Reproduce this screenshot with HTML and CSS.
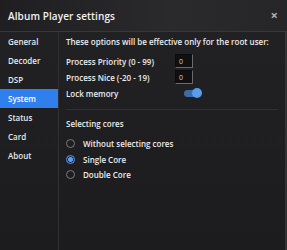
FILE: index.html
```html
<!DOCTYPE html>
<html lang="en">
<head>
  <meta charset="UTF-8" />
  <title>Album Player settings</title>
  <link rel="stylesheet" href="styles.css">
</head>
<body>
  <div class="dialog">
    <div class="header">
      <span class="title">Album Player settings</span>
      <span class="close">&times;</span>
    </div>
    <div class="main">
      <ul class="nav">
        <li>General</li>
        <li>Decoder</li>
        <li>DSP</li>
        <li class="active">System</li>
        <li>Status</li>
        <li>Card</li>
        <li>About</li>
      </ul>
      <div class="content">
        <p class="note">These options will be effective only for the root user:</p>
        <div class="row">
          <span class="label">Process Priority (0 - 99)</span>
          <input class="num" type="text" value="0" />
        </div>
        <div class="row">
          <span class="label">Process Nice (-20 - 19)</span>
          <input class="num" type="text" value="0" />
        </div>
        <div class="row">
          <span class="label">Lock memory</span>
          <span class="toggle"><span class="knob"></span></span>
        </div>
        <div class="divider"></div>
        <p class="section">Selecting cores</p>
        <div class="radio-row"><span class="radio"></span>Without selecting cores</div>
        <div class="radio-row"><span class="radio checked"></span>Single Core</div>
        <div class="radio-row"><span class="radio"></span>Double Core</div>
      </div>
    </div>
  </div>
</body>
</html>
```

FILE: styles.css
```css
/* General Styling */
body,
html {
  margin: 0;
  padding: 0;
  height: 100%;
  background: #1d1d20;
  font-family: "Open Sans", "Noto Sans", sans-serif;
  color: #ececec;
}

.dialog {
  height: 250px;
  display: flex;
  flex-direction: column;
  background: linear-gradient(180deg, #222225 0%, #1c1c1f 100%);
}

/* Header */
.header {
  height: 32px;
  flex: none;
  box-sizing: border-box;
  display: flex;
  align-items: center;
  justify-content: space-between;
  padding: 0 9px 0 8px;
  border-bottom: 1px solid #38383b;
  background: linear-gradient(90deg, #1f1f21 0%, #2a2a2d 60%, #262628 100%);
}

.title {
  font-size: 10px;
  font-weight: 600;
  color: #f2f2f2;
  letter-spacing: 0.1px;
}

.close {
  font-size: 13px;
  font-weight: 700;
  color: #b0b0b0;
  line-height: 1;
}

.main {
  flex: 1;
  display: flex;
}

/* Side Menu */
.nav {
  list-style: none;
  margin: 0;
  padding: 0;
  width: 58px;
  border-right: 1px solid #303033;
}

.nav li {
  height: 19px;
  line-height: 19px;
  padding-left: 8px;
  font-size: 8px;
  font-weight: 600;
  color: #e8e8e8;
}

.nav li.active {
  background: #2f80ed;
  color: #fff;
}

/* Content */
.content {
  flex: 1;
  padding: 0 7px 0 7px;
  border-right: 2px solid #333336;
  font-size: 8px;
  font-weight: 600;
}

.note {
  margin: 0;
  height: 19px;
  line-height: 19px;
  margin-bottom: 2px;
}

.row {
  height: 16px;
  display: flex;
  align-items: center;
}

.label {
  width: 109px;
}

.num {
  width: 18px;
  height: 14px;
  box-sizing: border-box;
  margin: 0;
  padding: 0 0 0 3px;
  background: #101012;
  color: #cfcfcf;
  font-family: inherit;
  font-size: 7px;
  border: 1px solid #0b0b0c;
  border-right-color: #6b6b6e;
  border-bottom-color: #6b6b6e;
}

.toggle {
  position: relative;
  margin-left: 9px;
  width: 15px;
  height: 7px;
  border-radius: 4px;
  background: #3e6aa6;
}

.knob {
  position: absolute;
  right: -3px;
  top: -2px;
  width: 10px;
  height: 10px;
  border-radius: 50%;
  background: #5a9bee;
}

.divider {
  height: 1px;
  background: #303033;
  margin: 8px 0 6px;
}

.section {
  margin: 0 0 4px;
  height: 16px;
  line-height: 16px;
}

.radio-row {
  height: 15.5px;
  display: flex;
  align-items: center;
}

.radio {
  width: 9px;
  height: 9px;
  box-sizing: border-box;
  margin: 0 8px 0 0;
  border: 1px solid #7a7a7d;
  border-radius: 50%;
}

.radio.checked {
  border-color: #5a9bee;
  background: radial-gradient(circle, #5a9bee 0 2.2px, transparent 2.6px);
}
```
